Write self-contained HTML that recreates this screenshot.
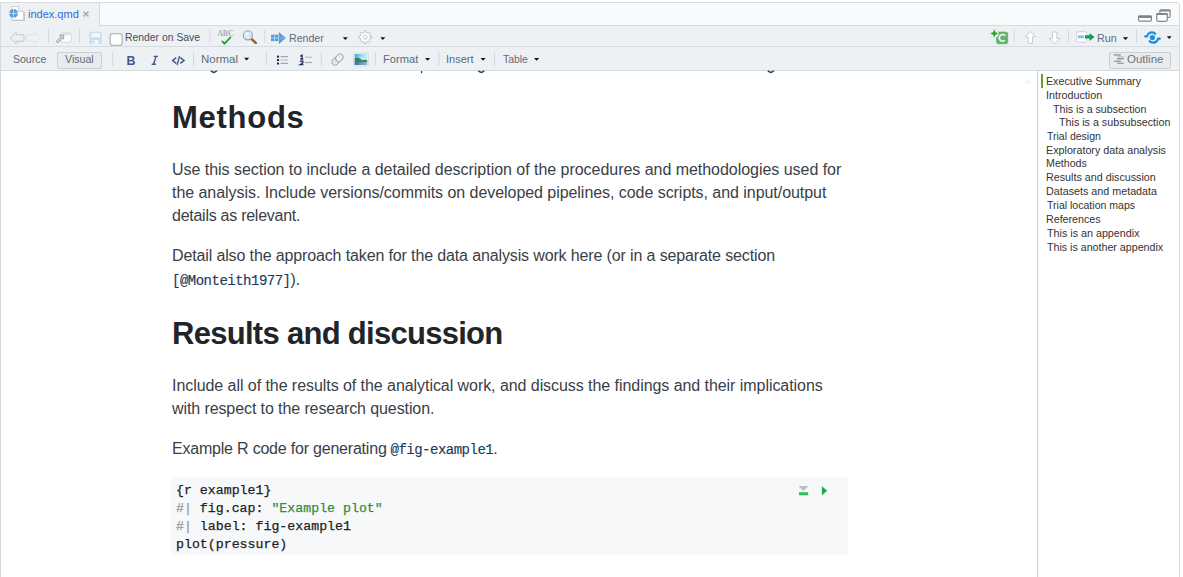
<!DOCTYPE html>
<html><head><meta charset="utf-8">
<style>
html,body{margin:0;padding:0;}
body{width:1183px;height:577px;overflow:hidden;background:#fff;position:relative;font-family:"Liberation Sans",sans-serif;}
.a{position:absolute;}
.t{position:absolute;white-space:nowrap;line-height:1;}
/* frame */
#frame{left:0;top:2px;width:1178px;height:580px;border:1px solid #d6dbe0;border-top-right-radius:3px;}
#tabbar{left:1px;top:3px;width:1178px;height:22px;background:#f8fafb;border-bottom:1px solid #d6dbe0;}
#tab{left:1px;top:3px;width:98px;height:23px;background:#edf1f4;border-right:1px solid #d6dbe0;}
#tb1{left:1px;top:26px;width:1178px;height:20px;background:#edf1f4;border-bottom:1px solid #d6dbe0;}
#tb2{left:1px;top:47px;width:1178px;height:23px;background:#edf1f4;border-bottom:1px solid #d6dbe0;}
.sep{position:absolute;width:1px;background:#d3d9de;}
.tbt{position:absolute;white-space:nowrap;line-height:1;color:#5d6b78;}
.dd{position:absolute;width:0;height:0;border-left:2.5px solid transparent;border-right:2.5px solid transparent;border-top:3px solid #111;}
/* content */
.p{position:absolute;left:172px;white-space:nowrap;font-size:16px;line-height:1;color:#3a4047;}
.h{position:absolute;left:172px;white-space:nowrap;font-weight:bold;line-height:1;color:#212529;}
.m{font-family:"Liberation Mono",monospace;}
.mb{-webkit-text-stroke:0.15px #203a5c;}
.ol{position:absolute;white-space:nowrap;font-size:11px;line-height:1;color:#333;}
</style></head><body>
<div id="frame" class="a"></div>
<div id="tabbar" class="a"></div>
<div id="tab" class="a"></div>
<div id="tb1" class="a"></div>
<div id="tb2" class="a"></div>

<!-- tab content -->
<div id="tx0" class="t" style="left:28.00px;top:9px;font-size:11px;color:#2f6bd8;transform:scaleX(1.000);transform-origin:0 0;">index.qmd</div>

<!-- window buttons -->

<!-- toolbar 1 -->
<div id="tx1" class="tbt" style="left:125.28px;top:32px;font-size:11px;color:#444d56;transform:scaleX(0.944);transform-origin:0 0;">Render on Save</div>
<div id="tx2" class="tbt" style="left:288.58px;top:33px;font-size:11px;transform:scaleX(0.964);transform-origin:0 0;">Render</div>
<div id="tx3" class="tbt" style="left:1096.52px;top:33px;font-size:11px;transform:scaleX(0.977);transform-origin:0 0;">Run</div>

<!-- toolbar 2 -->
<div id="tx4" class="tbt" style="left:12.52px;top:54px;font-size:11px;transform:scaleX(0.956);transform-origin:0 0;">Source</div>
<div class="a" style="left:57px;top:52px;width:43px;height:15px;border:1px solid #c9d0d7;border-radius:2px;background:#e9ebed;"></div>
<div id="tx5" class="tbt" style="left:64.98px;top:54px;font-size:11px;transform:scaleX(0.965);transform-origin:0 0;">Visual</div>
<div id="tx6" class="tbt" style="left:200.97px;top:54px;font-size:11px;transform:scaleX(1.044);transform-origin:0 0;">Normal</div>
<div id="tx7" class="tbt" style="left:383.47px;top:54px;font-size:11px;transform:scaleX(1.015);transform-origin:0 0;">Format</div>
<div id="tx8" class="tbt" style="left:446.49px;top:54px;font-size:11px;transform:scaleX(1.001);transform-origin:0 0;">Insert</div>
<div id="tx9" class="tbt" style="left:502.51px;top:54px;font-size:11px;transform:scaleX(0.944);transform-origin:0 0;">Table</div>
<div class="a" style="left:1109px;top:52px;width:60px;height:15px;border:1px solid #c9d0d7;border-radius:2px;background:#e9ebed;"></div>
<div id="tx10" class="tbt" style="color:#6a747e;left:1126.97px;top:54px;font-size:11px;transform:scaleX(1.046);transform-origin:0 0;">Outline</div>

<!-- outline pane -->
<div class="a" style="left:1037px;top:71px;width:1px;height:506px;background:#d3d3d3;"></div><div class="a" style="left:1038px;top:71px;width:1px;height:506px;background:#f6f6f6;"></div>
<div class="a" style="left:1041px;top:74px;width:2px;height:14px;background:#6e9a2e;"></div>
<div id="ol0" class="ol" style="left:1045.53px;top:76px;transform:scaleX(0.971);transform-origin:0 0;">Executive Summary</div>
<div id="ol1" class="ol" style="left:1046.02px;top:90px;transform:scaleX(0.976);transform-origin:0 0;">Introduction</div>
<div id="ol2" class="ol" style="left:1053.00px;top:104px;transform:scaleX(0.966);transform-origin:0 0;">This is a subsection</div>
<div id="ol3" class="ol" style="left:1058.70px;top:117px;transform:scaleX(0.974);transform-origin:0 0;">This is a subsubsection</div>
<div id="ol4" class="ol" style="left:1047.30px;top:131px;transform:scaleX(0.953);transform-origin:0 0;">Trial design</div>
<div id="ol5" class="ol" style="left:1046.03px;top:145px;transform:scaleX(0.976);transform-origin:0 0;">Exploratory data analysis</div>
<div id="ol6" class="ol" style="left:1045.73px;top:158px;transform:scaleX(0.969);transform-origin:0 0;">Methods</div>
<div id="ol7" class="ol" style="left:1045.73px;top:172px;transform:scaleX(0.976);transform-origin:0 0;">Results and discussion</div>
<div id="ol8" class="ol" style="left:1045.73px;top:186px;transform:scaleX(0.976);transform-origin:0 0;">Datasets and metadata</div>
<div id="ol9" class="ol" style="left:1046.70px;top:200px;transform:scaleX(0.958);transform-origin:0 0;">Trial location maps</div>
<div id="ol10" class="ol" style="left:1045.72px;top:214px;transform:scaleX(0.970);transform-origin:0 0;">References</div>
<div id="ol11" class="ol" style="left:1046.70px;top:228px;transform:scaleX(0.976);transform-origin:0 0;">This is an appendix</div>
<div id="ol12" class="ol" style="left:1046.70px;top:242px;transform:scaleX(0.969);transform-origin:0 0;">This is another appendix</div>

<!-- content -->
<div id="c0" class="h" style="top:102px;font-size:31px;letter-spacing:0.736px;">Methods</div>
<div id="c1" class="p" style="letter-spacing:-0.033px;top:162px;">Use this section to include a detailed description of the procedures and methodologies used for</div>
<div id="c2" class="p" style="letter-spacing:-0.051px;top:185px;">the analysis. Include versions/commits on developed pipelines, code scripts, and input/output</div>
<div id="c3" class="p" style="letter-spacing:-0.263px;top:208px;">details as relevant.</div>
<div id="c4" class="p" style="letter-spacing:-0.132px;top:248px;">Detail also the approach taken for the data analysis work here (or in a separate section</div>
<div id="c5" class="p" style="top:272px;"><span class="m mb" style="font-size:14px;letter-spacing:-0.5px;color:#203a5c;">[@Monteith1977]</span>).</div>
<div id="c6" class="h" style="top:318px;font-size:31px;letter-spacing:-0.713px;">Results and discussion</div>
<div id="c7" class="p" style="letter-spacing:-0.058px;top:378px;">Include all of the results of the analytical work, and discuss the findings and their implications</div>
<div id="c8" class="p" style="letter-spacing:-0.095px;top:401px;">with respect to the research question.</div>
<div id="c9" class="p" style="letter-spacing:-0.207px;top:441px;">Example R code for generating</div>
<div id="c10" class="p" style="top:441px;left:390.5px;"><span class="m mb" style="font-size:14px;letter-spacing:-0.5px;color:#203a5c;">@fig-example1</span>.</div>

<div class="a" style="left:171px;top:477px;width:677px;height:78px;background:#f6f8fa;"></div>
<div class="a m" style="left:176px;top:482px;font-size:13.25px;line-height:18.1px;color:#1e1e1e;white-space:pre;-webkit-text-stroke:0.25px;">{r example1}
<span style="color:#999">#|</span> fig.cap: <span style="color:#3a8a3a">"Example plot"</span>
<span style="color:#999">#|</span> label: fig-example1
plot(pressure)</div>

<svg class="a" style="left:0;top:0" width="1183" height="577" viewBox="0 0 1183 577">
<!-- tab doc icon -->
<path d="M11.5 6.5 H18.5 L23.5 11.5 V20 H11.5 Z" fill="#fff" stroke="#cfd2d5" stroke-width="1"/>
<path d="M12 20.5 H24.5 V12" fill="none" stroke="#c2c5c8" stroke-width="1"/>
<path d="M18.5 6.5 V11.5 H23.5" fill="#f0f0f0" stroke="#cfd2d5" stroke-width="1"/>
<circle cx="13.6" cy="13.4" r="4.3" fill="#5b9bd5"/>
<path d="M13.6 9 V17.8 M9.2 13.4 H18" stroke="#e8f0f8" stroke-width="0.7"/>
<!-- close x -->
<path d="M83.5 11.5 L88.5 16.5 M88.5 11.5 L83.5 16.5" stroke="#a9abad" stroke-width="1.6"/>
<!-- minimize / maximize -->
<rect x="1138.6" y="16.2" width="12.8" height="5" rx="1.2" fill="#fff" stroke="#7c878f" stroke-width="1.2"/>
<rect x="1138" y="15.6" width="14" height="2.5" rx="1" fill="#7c878f"/>
<rect x="1159.9" y="10" width="10.2" height="7.5" rx="1.5" fill="none" stroke="#7c878f" stroke-width="1.2"/>
<rect x="1159.4" y="9.5" width="11.2" height="2" rx="1" fill="#7c878f"/>
<rect x="1156.8" y="13.5" width="10.5" height="7.8" rx="1.5" fill="#fff" stroke="#7c878f" stroke-width="1.2"/>
<rect x="1156.2" y="13" width="11.6" height="2" rx="1" fill="#7c878f"/>

<!-- back/fwd arrows -->
<path d="M10.2 38 L16.2 32.5 V34.8 H23.3 Q24 34.8 24 35.5 V40.6 Q24 41.3 23.3 41.3 H16.2 V43.6 Z" fill="#eeeff0" stroke="#c3c7ca" stroke-width="1"/>
<path d="M40.6 38 L34.6 32.5 V34.8 H27 Q26.3 34.8 26.3 35.5 V40.6 Q26.3 41.3 27 41.3 H34.6 V43.6 Z" fill="#eff1f3" stroke="#dde1e4" stroke-width="1"/>
<!-- popout -->
<rect x="61" y="32.3" width="10.4" height="10" rx="1.8" fill="#fbfcfd" stroke="#d3dae0" stroke-width="0.9"/>
<rect x="61.5" y="32.8" width="9.4" height="2.6" fill="#cfe6fa"/>
<path d="M57.6 41.4 L61.6 37.4" stroke="#8f9aa4" stroke-width="2.8" stroke-linecap="round"/>
<path d="M57.6 41.4 L61.6 37.4" stroke="#eef1f4" stroke-width="1.1" stroke-linecap="round"/>
<path d="M59.6 35.2 H63.6 V39.2 Z" fill="#e9edf0" stroke="#8f9aa4" stroke-width="0.9" stroke-linejoin="round"/>
<!-- save -->
<rect x="89.3" y="31.7" width="12.4" height="12.2" rx="1.2" fill="#c8ddf0"/>
<rect x="91.3" y="33" width="8.6" height="4.4" fill="#f3f7fa"/>
<rect x="92.5" y="40" width="6" height="3.9" fill="#f3f7fa"/>
<rect x="93.3" y="40.8" width="1.6" height="2.6" fill="#bcd3e8"/>
<!-- checkbox -->
<rect x="110.2" y="33.7" width="12" height="11.6" rx="2.6" fill="#fff" stroke="#b5b7b9" stroke-width="1.3"/>

<!-- ABC check -->
<text x="217.2" y="35.8" font-family="Liberation Serif" font-weight="bold" font-size="7.4" fill="#a9adb1" textLength="16.6" lengthAdjust="spacingAndGlyphs">ABC</text>
<path d="M222.4 41.5 L224.5 43.7 L230.4 37.5" fill="none" stroke="#1e9a2e" stroke-width="1.8" stroke-linecap="round" stroke-linejoin="round"/>
<!-- magnifier -->
<path d="M251.3 38.8 L255.8 42.9" stroke="#9a5c22" stroke-width="2.4" stroke-linecap="round"/>
<circle cx="247.9" cy="35.3" r="4.6" fill="#d6eafb" stroke="#8ea3b4" stroke-width="1.1"/>
<circle cx="246.8" cy="34" r="1.6" fill="#f2f8ff"/>

<!-- render icon -->
<rect x="271" y="34.7" width="7.2" height="6.4" fill="#5b9ad8"/>
<path d="M274.6 34.7 V41.1 M271 37.9 H278.5" stroke="#c6dcf2" stroke-width="0.8"/>
<path d="M278.8 31.9 L285.9 37.9 L278.8 43.9 Z" fill="#5b9ad8"/>
<path d="M278.8 38 H284" stroke="#a9c9ec" stroke-width="0.7"/>
<!-- dropdown arrows -->
<path d="M342.8 37.2 H347.8 L345.3 40 Z" fill="#111"/>
<path d="M380.3 37.2 H385.3 L382.8 40 Z" fill="#111"/>
<path d="M244 57.8 H249.2 L246.6 60.6 Z" fill="#111"/>
<path d="M425.1 58 H430.1 L427.6 60.8 Z" fill="#111"/>
<path d="M480.6 58 H485.6 L483.1 60.8 Z" fill="#111"/>
<path d="M534 58 H539.2 L536.6 60.8 Z" fill="#111"/>
<path d="M1122.8 37.2 H1128.2 L1125.5 40 Z" fill="#111"/>
<path d="M1166.8 36.3 H1171.6 L1169.2 39.1 Z" fill="#111"/>
<!-- gear -->
<g transform="translate(365.2 37.3)">
<path id="gear" d="M4.93 -0.86 L6.56 -0.72 L6.56 0.72 L4.93 0.86 L4.09 2.88 L5.15 4.13 L4.13 5.15 L2.88 4.09 L0.86 4.93 L0.72 6.56 L-0.72 6.56 L-0.86 4.93 L-2.88 4.09 L-4.13 5.15 L-5.15 4.13 L-4.09 2.88 L-4.93 0.86 L-6.56 0.72 L-6.56 -0.72 L-4.93 -0.86 L-4.09 -2.88 L-5.15 -4.13 L-4.13 -5.15 L-2.88 -4.09 L-0.86 -4.93 L-0.72 -6.56 L0.72 -6.56 L0.86 -4.93 L2.88 -4.09 L4.13 -5.15 L5.15 -4.13 L4.09 -2.88 Z" stroke-linejoin="round" fill="#fff" stroke="#b3b6b9" stroke-width="0.8"/>
<circle r="1.9" fill="#fff" stroke="#b3b6b9" stroke-width="0.8"/>
</g>

<!-- insert chunk -->
<rect x="996.5" y="32" width="11.2" height="11.8" rx="2" fill="#63b46b" stroke="#55a35c" stroke-width="0.6"/>
<path d="M1004.8 35.4 A3.2 3.4 0 1 0 1004.8 40.3" fill="none" stroke="#f0f8f0" stroke-width="1.6"/><path d="M1004.9 34.4 V36.4" stroke="#f0f8f0" stroke-width="0.9"/>
<circle cx="994.3" cy="33.6" r="4.2" fill="#fff" stroke="#d3d3d3" stroke-width="0.8"/>
<path d="M994.3 30.6 V36.6 M991.3 33.6 H997.3" stroke="#17a317" stroke-width="2"/>
<!-- up/down -->
<path d="M1030.4 31.4 L1035.5 36.8 H1032.5 V43.3 H1028.2 V36.8 H1025.2 Z" fill="#fff" stroke="#c2c6ca" stroke-width="0.9" stroke-linejoin="round"/>
<path d="M1054.6 43.9 L1059.9 38.5 H1056.9 V32 H1052.4 V38.5 H1049.3 Z" fill="#fff" stroke="#c2c6ca" stroke-width="0.9" stroke-linejoin="round"/>
<!-- run -->
<rect x="1076.8" y="31.7" width="9.8" height="10.4" rx="1.5" fill="#fff" stroke="#ccd0d4" stroke-width="0.9"/>
<rect x="1078" y="35.4" width="5.9" height="2.8" fill="#8db6f2"/>
<path d="M1084.9 35.3 H1089.6 V32.9 L1094.5 36.9 L1089.6 40.9 V38.4 H1084.9 Z" fill="#0fa04c"/>
<!-- publish -->
<path d="M1145.2 36.4 H1146.8 Q1148.5 32.3 1152 32.3 Q1154.2 32.3 1155.2 33.8" fill="none" stroke="#1a8fe0" stroke-width="2.2" stroke-linecap="round"/>
<path d="M1159.8 38.7 H1158.2 Q1156.5 42.7 1153 42.7 Q1150.6 42.7 1149.6 41.2" fill="none" stroke="#1a8fe0" stroke-width="2.2" stroke-linecap="round"/>
<circle cx="1152.4" cy="37.6" r="2.6" fill="#1a8fe0"/>

<!-- B I code -->
<text x="126.6" y="64.6" font-family="Liberation Sans" font-weight="bold" font-size="12.4" fill="#475785">B</text>
<path d="M153.6 56.4 H157.9 M151.6 64.3 H155.9 M156.1 56.4 L153.5 64.3" fill="none" stroke="#475785" stroke-width="1.4"/>
<path d="M176.3 57.6 L172.6 60.5 L176.3 63.4 M180.3 57.6 L184 60.5 L180.3 63.4" fill="none" stroke="#475785" stroke-width="1.5"/>
<path d="M179.6 56 L177.1 65" stroke="#475785" stroke-width="1.3"/>
<!-- bullet list -->
<g fill="#1f2f5f"><rect x="276.9" y="55.6" width="2.2" height="2.1" rx="0.6"/><rect x="276.9" y="59" width="2.2" height="2.1"/><rect x="276.9" y="62.4" width="2.2" height="2.1" rx="0.6"/></g>
<path d="M280.6 56.6 H288 M280.6 63.4 H288" stroke="#9ea6ae" stroke-width="1.2"/>
<path d="M280.6 60 H288" stroke="#b9bfc5" stroke-width="1.2"/>
<!-- numbered list -->
<path d="M300.2 56.2 L302 55.2 V59.2 M300.3 59 H303.3" fill="none" stroke="#1f2f5f" stroke-width="1.3"/>
<path d="M300.2 62 Q300.8 60.9 301.9 60.9 Q303.2 60.9 303.1 62.2 Q303 63 300.3 64.5 H303.4" fill="none" stroke="#1f2f5f" stroke-width="1.3"/>
<path d="M304.9 57.2 H312.1" stroke="#b9bfc5" stroke-width="1.2"/>
<path d="M304.9 62.5 H312.1" stroke="#9ea6ae" stroke-width="1.2"/>
<!-- link -->
<g transform="translate(337.6 59.5) rotate(-45)" fill="none" stroke="#a3abb3" stroke-width="1">
<rect x="-6.6" y="-3" width="8.2" height="6" rx="3" fill="#f3f5f7"/>
<rect x="-1.6" y="-3" width="8.2" height="6" rx="3" fill="#f3f5f7"/>
<path d="M-1.6 0 A3 3 0 0 1 1.4 -3" />
<circle cx="-3.6" cy="0" r="1" fill="#fff" stroke="#c5cbd0" stroke-width="0.6"/>
<circle cx="3.6" cy="0" r="1" fill="#fff" stroke="#c5cbd0" stroke-width="0.6"/>
</g>
<!-- image -->
<defs>
<linearGradient id="sky" x1="0" y1="0" x2="1" y2="0.6"><stop offset="0" stop-color="#3d9ce8"/><stop offset="0.5" stop-color="#a6dcf6"/><stop offset="1" stop-color="#d4f4fb"/></linearGradient>
<linearGradient id="wat" x1="0" y1="0" x2="1" y2="0"><stop offset="0" stop-color="#3f6fa3"/><stop offset="1" stop-color="#8fb5d5"/></linearGradient>
</defs>
<rect x="353.4" y="53" width="15" height="13.3" rx="1" fill="#f3f3f3" stroke="#d6d9dc" stroke-width="0.8"/>
<rect x="354.7" y="54" width="12.5" height="11" fill="url(#sky)"/>
<path d="M354.7 58.2 Q356.5 57.3 358 57.8 Q361 59 362.5 60.2 Q364.5 59.4 367.2 60 V62 H354.7 Z" fill="#2e8a52"/>
<rect x="354.7" y="61.9" width="12.5" height="3.1" fill="url(#wat)"/>

<!-- outline icon -->
<g fill="#9b9fa3">
<rect x="1113.9" y="54.2" width="6.9" height="1.5"/>
<rect x="1117.2" y="56.3" width="6.6" height="1.3" fill="#b8bbbe"/>
<rect x="1117.2" y="58" width="6.6" height="1.6"/>
<rect x="1113.9" y="60.6" width="6.9" height="1.4"/>
<rect x="1117.2" y="62.6" width="6.6" height="1.4"/>
</g>

<!-- separators -->
<g fill="#d2d8dd">
<rect x="48" y="29" width="1" height="13.5"/>
<rect x="79" y="29" width="1" height="13.5"/>
<rect x="209.5" y="30" width="1" height="12"/>
<rect x="264.3" y="29.5" width="1" height="13"/>
<rect x="1013.8" y="29" width="1" height="13.5"/>
<rect x="1068" y="29" width="1" height="13.5"/>
<rect x="1136" y="29.4" width="1" height="13.2"/>
<rect x="112.2" y="52" width="1" height="13.6"/>
<rect x="193.1" y="52" width="1" height="13.6"/>
<rect x="266" y="52" width="1" height="13.6"/>
<rect x="320.8" y="52" width="1" height="13.6"/>
<rect x="374.9" y="52" width="1" height="13.6"/>
<rect x="438.4" y="52" width="1" height="13.6"/>
<rect x="494" y="52" width="1" height="13.6"/>
</g>

<!-- code chunk icons -->
<path d="M798.4 485.9 H808.4 L803.4 491.1 Z" fill="#bcbfc2"/>
<rect x="799" y="492.2" width="9.2" height="3.1" fill="#2fbf62"/>
<path d="M821.9 486.3 L827.1 490.8 L821.9 495.3 Z" fill="#19a64a"/>
<!-- faint scroll triangle -->
<path d="M1024 83.5 L1028 78.5 L1032 83.5 Z" fill="#f3f5f7"/>
<!-- cut-off descenders -->
<g fill="none" stroke="#3a3f45" stroke-width="1.6">
<path d="M210.8 70.8 Q213.7 73.9 216.8 70.8"/>
<path d="M478.3 70.8 Q481.3 73.9 484.3 70.8"/>
<path d="M767.8 70.8 Q770.8 73.9 773.8 70.8"/>
</g>
<rect x="420.9" y="71" width="1.3" height="2.2" fill="#3a3f45"/>
</svg>
</body></html>
